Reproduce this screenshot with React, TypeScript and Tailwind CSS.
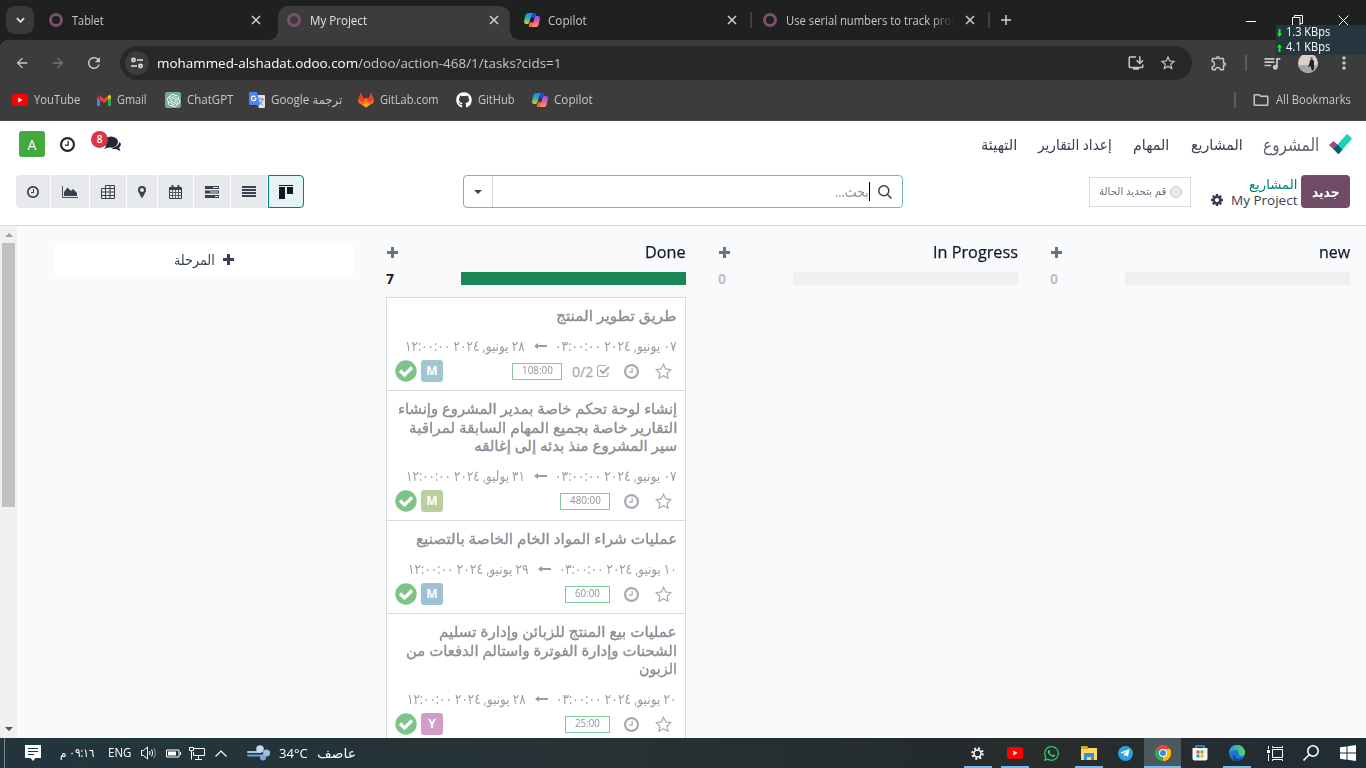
import { useLayoutEffect, useRef, useState } from "react";
import type { ReactNode } from "react";
import { MdArrowBack, MdArrowForward, MdRefresh, MdStarOutline, MdOutlineExtension, MdQueueMusic, MdMoreVert, MdOutlineFolder, MdInstallDesktop } from "react-icons/md";
import { FaGithub, FaWhatsapp, FaTelegramPlane } from "react-icons/fa";
import { SiOpenai } from "react-icons/si";

/* Text condensed or widened to an exact advance width. */
function Fit({ w, rtl, className = "", children }: { w: number; rtl?: boolean; className?: string; children: ReactNode }) {
  const ref = useRef<HTMLSpanElement>(null);
  const [scale, setScale] = useState(1);
  useLayoutEffect(() => {
    if (ref.current && ref.current.offsetWidth) setScale(w / ref.current.offsetWidth);
  }, [w]);
  return (
    <span className={`flex shrink-0 whitespace-nowrap ${rtl ? "justify-end" : "justify-start"} ${className}`} style={{ width: w }}>
      <span ref={ref} dir={rtl ? "rtl" : "ltr"} className={`inline-block shrink-0 ${rtl ? "origin-right" : "origin-left"}`} style={{ transform: `scaleX(${scale})` }}>
        {children}
      </span>
    </span>
  );
}

const Ring = () => <span className="size-[14px] shrink-0 rounded-full border-[3px] border-[#7b4f70]" />;

const X = ({ className = "" }: { className?: string }) => (
  <svg viewBox="0 0 10 10" className={`size-[10px] shrink-0 ${className}`} fill="none" stroke="currentColor" strokeWidth="1.5"><path d="M1 1l8 8M9 1L1 9" /></svg>
);

function Copilot() {
  return (
    <svg viewBox="0 0 16 16" className="size-4 shrink-0">
      <defs>
        <linearGradient id="cpa" x1="0" y1="0" x2="0" y2="1"><stop offset="0" stopColor="#1b8af5" /><stop offset=".5" stopColor="#27b3b0" /><stop offset=".8" stopColor="#a5c83c" /><stop offset="1" stopColor="#f3c01d" /></linearGradient>
        <linearGradient id="cpb" x1="0" y1="0" x2="0" y2="1"><stop offset="0" stopColor="#9b4fe8" /><stop offset=".5" stopColor="#e45ca8" /><stop offset="1" stopColor="#fb9a58" /></linearGradient>
      </defs>
      <path d="M5 15h5.200c1.400 0 2-.9 2.400-2.200l.5-2.600H6.500L5 12z" fill="#f6663f" />
      <path d="M5 1h5.200c1.300 0 1.900.9 2.200 2.200l.6 2.400H7.500L6 3z" fill="#1c50d0" />
      <path d="M4.800 1H9.500C8.200 1 7.700 2 7.300 3.300L5.600 9.600C5.200 11 4.600 12 3.300 12H2.200C.4 12-.2 10.700.1 9l1.200-5.400C1.700 1.800 3 1 4.800 1z" fill="url(#cpa)" />
      <path d="M11.200 15H6.500c1.300 0 1.800-1 2.200-2.300l1.700-6.300C10.800 5 11.400 4 12.700 4h1.100c1.800 0 2.400 1.300 2.100 3l-1.200 5.400c-.4 1.800-1.700 2.600-3.500 2.600z" fill="url(#cpb)" />
    </svg>
  );
}

const YouTube = () => (
  <svg viewBox="0 0 16 12" className="h-3 w-4 shrink-0"><rect width="16" height="12" rx="3" fill="#f00" /><path d="M6.300 3.500v5L10.600 6z" fill="#fff" /></svg>
);

const Gmail = () => (
  <svg viewBox="0 0 14 11" className="h-[11px] w-[14px] shrink-0">
    <path d="M0 2v8.200c0 .5.300.800.800.800H3V4z" fill="#4285f4" />
    <path d="M14 2v8.200c0 .5-.300.800-.800.800H11V4z" fill="#34a853" />
    <path d="M11 1v4l3-2.200V1.500C14 .2 12.500-.4 11.500.4z" fill="#fbbc04" />
    <path d="M3 1v4L0 2.800V1.500C0 .2 1.500-.4 2.500.4z" fill="#c5221f" />
    <path d="M3 .8V5l4 3 4-3V.8L7 3.800z" fill="#ea4335" />
  </svg>
);

const ChatGpt = () => (
  <span className="flex size-4 shrink-0 items-center justify-center rounded-[2px] bg-[#74aa9c]"><SiOpenai className="size-[13px] text-white" /></span>
);

const Translate = () => (
  <svg viewBox="0 0 16 16" className="size-4 shrink-0">
    <path d="M7 3h8.200c.4 0 .8.300.8.800V15c0 .5-.400.900-.900.900H9.500z" fill="#dfe1e4" />
    <path d="M8 7h7M11.400 5.800V7M9.500 8.200c.8 1.800 2.300 3.400 4.300 4.600M13.800 7.200c-.6 2.400-2 4.200-4.200 5.400" stroke="#6d7c8c" strokeWidth=".9" fill="none" />
    <path d="M.8 0H8l3 13H.9c-.500 0-.9-.400-.9-.9V.8C0 .3.300 0 .8 0z" fill="#4a86f0" />
    <path d="M9.700 13H6.800l2.700 3z" fill="#2457c5" />
    <path d="M6.500 5A2.300 2.300 0 1 0 7 6.700H4.800" stroke="#fff" strokeWidth="1.100" fill="none" />
  </svg>
);

const GitLab = () => (
  <svg viewBox="0 0 16 16" className="size-4 shrink-0">
    <path d="M2.800.8L.3 7.400c-.500 1.500 0 3 1.200 4L8 15.600l6.500-4.200c1.200-1 1.700-2.500 1.200-4L13.200.800 10.800 6H5.200z" fill="#fc6d26" />
    <path d="M2.800.8L.3 7.400 4.700 10.500 8 6H5.200zM13.200.8l2.500 6.600-4.400 3.100L8 6h2.800z" fill="#e24329" />
    <path d="M4.700 12.800L8 10.300l3.300 2.500L8 15.500z" fill="#fca326" />
  </svg>
);

type TabProps = { icon: ReactNode; label: string; w: number; active?: boolean; fade?: boolean; cop?: boolean };
function Tab({ icon, label, w, active, fade, cop }: TabProps) {
  return (
    <div className={`relative flex h-[34px] w-[238px] shrink-0 items-center pb-1.5 ${cop ? "pl-2" : "pl-[9px]"}`}>
      {active && (
        <span className="absolute inset-y-0 left-0 w-[232px] rounded-t-[10px] bg-[#3c3c3c]">
          <span className="absolute bottom-0 -left-[10px] size-[10px] bg-[radial-gradient(circle_at_0_0,transparent_10px,#3c3c3c_10px)]" />
          <span className="absolute -right-[10px] bottom-0 size-[10px] bg-[radial-gradient(circle_at_100%_0,transparent_10px,#3c3c3c_10px)]" />
        </span>
      )}
      <span className={`relative flex w-full items-center ${cop ? "gap-2" : "gap-[9px]"}`}>
        {icon}
        <span className={`w-[168px] pt-px ${fade ? "overflow-hidden [mask-image:linear-gradient(to_right,#000_145px,transparent_168px)]" : ""}`}>
          <Fit w={w} className={active ? "text-[12px] text-[#e3e3e3]" : "text-[12px] text-[#c7c7c7]"}>{label}</Fit>
        </span>
        <X className={cop ? "ml-[3px] text-[#d0d0d0]" : "ml-[2px] text-[#d0d0d0]"} />
      </span>
    </div>
  );
}

const bookmarks: { icon: ReactNode; label: string; w: number; gap: string }[] = [
  { icon: <YouTube />, label: "YouTube", w: 46, gap: "" },
  { icon: <Gmail />, label: "Gmail", w: 30, gap: "ml-[17px]" },
  { icon: <ChatGpt />, label: "ChatGPT", w: 46, gap: "ml-[18px]" },
  { icon: <Translate />, label: "Google ترجمة", w: 71, gap: "ml-4" },
  { icon: <GitLab />, label: "GitLab.com", w: 59, gap: "ml-4" },
  { icon: <FaGithub className="size-4 text-white" />, label: "GitHub", w: 37, gap: "ml-[17px]" },
  { icon: <Copilot />, label: "Copilot", w: 39, gap: "ml-[17px]" },
];

function Browser() {
  return (
    <header className="relative h-[121px] shrink-0 border-b border-[#4a4a4a] bg-[#3c3c3c] text-[12px] text-[#c7c7c7]">
      <div className="flex h-10 items-start bg-[#1f2120] pt-1.5">
        <span className="ml-1.5 mr-1.5 flex size-7 items-center justify-center rounded-[9px] bg-[#3a3a3a]">
          <svg viewBox="0 0 10 6" className="h-1.5 w-[9px]" fill="none" stroke="#e3e3e3" strokeWidth="2"><path d="M1 1l4 4 4-4" /></svg>
        </span>
        <Tab icon={<Ring />} label="Tablet" w={32} />
        <Tab icon={<Ring />} label="My Project" w={57} active />
        <Tab icon={<Copilot />} label="Copilot" w={39} cop />
        <div className="relative flex">
          <span className="absolute top-[6px] -left-[4px] h-4 w-[2px] bg-[#3f4140]" />
          <Tab icon={<Ring />} label="Use serial numbers to track produ" w={179} fade />
          <span className="absolute top-[6px] right-[2px] h-4 w-[2px] bg-[#3f4140]" />
        </div>
        <svg viewBox="0 0 10 10" className="mt-[9px] ml-[9px] size-[10px]" stroke="#d0d0d0" strokeWidth="1.500"><path d="M5 0v10M0 5h10" /></svg>
        <div className="mt-[9px] mr-[17px] ml-auto flex items-center text-white">
          <svg viewBox="0 0 10 10" className="mr-9 size-[10px]" stroke="#fff"><path d="M0 5.500h10" /></svg>
          <svg viewBox="0 0 11 11" className="mr-[35px] size-[11px]" stroke="#fff" fill="none"><path d="M.5 2.500h7.500v8H.5zM2.500 2.500v-2h8v8H8" /></svg>
          <svg viewBox="0 0 11 11" className="size-[11px]" stroke="#fff"><path d="M.5.5l10 10M10.500.5l-10 10" /></svg>
        </div>
      </div>
      <span className="absolute top-10 left-0 size-2 bg-[radial-gradient(circle_at_100%_100%,transparent_8px,#1f2120_8px)]" />
      <div className="flex h-[46px] items-center">
        <MdArrowBack className="ml-[14px] size-4" />
        <MdArrowForward className="ml-5 size-4 text-[#757575]" />
        <MdRefresh className="ml-[19px] size-[18px]" />
        <div className="ml-[17px] flex h-[34px] w-[1072px] items-center rounded-full bg-[#282828] pl-[5px] text-[13.500px]">
          <span className="flex size-6 items-center justify-center rounded-full bg-[#3c3c3c]">
            <svg viewBox="0 0 12 12" className="size-3" fill="none" stroke="#e3e3e3" strokeWidth="1.600"><circle cx="2.500" cy="3" r="1.600" /><path d="M6 3h6M0 9h6" /><circle cx="9.500" cy="9" r="1.600" /></svg>
          </span>
          <Fit w={404} className="ml-2"><span className="text-white">mohammed-alshadat.odoo.com</span>/odoo/action-468/1/tasks?cids=1</Fit>
          <MdInstallDesktop className="mr-[14px] ml-auto size-[18px]" />
          <MdStarOutline className="mr-[15px] size-[18px]" />
        </div>
        <MdOutlineExtension className="ml-[18px] size-[18px]" />
        <span className="ml-[17px] h-4 w-[2px] bg-[#5b5b5b]" />
        <MdQueueMusic className="ml-[15px] size-5" />
        <span className="ml-4 size-5 overflow-hidden rounded-full">
          <svg viewBox="0 0 20 20"><rect width="20" height="20" fill="#e0cfc6" /><path d="M0 12h20v8H0z" fill="#a6a7aa" /><path d="M12 7l2-1 2 2v8l-2 2-1.500-5-2.500 1 1.500-4z" fill="#20242a" /><circle cx="13.500" cy="5" r="1.300" fill="#9a6f62" /></svg>
        </span>
        <MdMoreVert className="ml-[16px] size-5" />
      </div>
      <div className="flex h-7 items-center pl-3">
        {bookmarks.map((b) => (
          <span key={b.label} className={`flex items-center gap-1.5 ${b.gap}`}>{b.icon}<Fit w={b.w}>{b.label}</Fit></span>
        ))}
        <span className="mr-4 ml-auto h-4 w-[2px] bg-[#5b5b5b]" />
        <MdOutlineFolder className="size-[18px]" />
        <Fit w={75} className="mr-[15px] ml-[6px]">All Bookmarks</Fit>
      </div>
      <div className="absolute top-[25px] right-0 flex h-[30px] w-[90px] flex-col bg-[#26363f] pl-px text-[12px] leading-[15px] text-white">
        {["1.3 KBps", "4.1 KBps"].map((t, i) => (
          <span key={t} className="flex h-[15px] items-center gap-1">
            <svg viewBox="0 0 5 8" className={`h-2 w-[5px] ${i ? "rotate-180" : ""}`} fill="#0f0"><path d="M1.500 0h2v4.500H5L2.500 8 0 4.500h1.500z" /></svg>
            <Fit w={44} className="pb-[2px] leading-[13px]">{t}</Fit>
          </span>
        ))}
      </div>
    </header>
  );
}

const Clock = ({ className = "" }: { className?: string }) => (
  <svg viewBox="0 128 1536 1536" className={`shrink-0 ${className}`} fill="currentColor">
    <path d="M896 544v448q0 14-9 23t-23 9h-320q-14 0-23-9t-9-23v-64q0-14 9-23t23-9h224v-352q0-14 9-23t23-9h64q14 0 23 9t9 23zm416 352q0-148-73-273t-198-198-273-73-273 73-198 198-73 273 73 273 198 198 273 73 273-73 198-198 73-273zm224 0q0 209-103 385.500t-279.500 279.500-385.500 103-385.500-103-279.500-279.500-103-385.500 103-385.500 279.500-279.500 385.500-103 385.500 103 279.500 279.500 103 385.500z" />
  </svg>
);

const Plus = ({ className = "" }: { className?: string }) => (
  <svg viewBox="0 0 11 11" className={`size-[11px] shrink-0 ${className}`} fill="currentColor"><path d="M4 0h3v4h4v3H7v4H4V7H0V4h4z" /></svg>
);

const Cog = ({ className = "" }: { className?: string }) => (
  <svg viewBox="128 128 1536 1536" className={`shrink-0 ${className}`} fill="currentColor">
    <path d="M1152 896q0-106-75-181t-181-75-181 75-75 181 75 181 181 75 181-75 75-181zm512-109v222q0 12-8 23t-20 13l-185 28q-19 54-39 91 35 50 107 138 10 12 10 25t-9 23q-27 37-99 108t-94 71q-12 0-26-9l-138-108q-44 23-91 38-16 136-29 186-7 28-36 28h-222q-14 0-24.500-8.500t-11.500-21.500l-28-184q-49-16-90-37l-141 107q-10 9-25 9-14 0-25-11-126-114-165-168-7-10-7-23 0-12 8-23 15-21 51-66.500t54-70.500q-27-50-41-99l-183-27q-13-2-21-12.500t-8-23.500v-222q0-12 8-23t19-13l186-28q14-46 39-92-40-57-107-138-10-12-10-24 0-10 9-23 26-36 98.500-107.500t94.500-71.500q13 0 26 10l138 107q44-23 91-38 16-136 29-186 7-28 36-28h222q14 0 24.500 8.500t11.500 21.500l28 184q49 16 90 37l142-107q9-9 24-9 13 0 25 10 129 119 165 170 7 8 7 22 0 12-8 23-15 21-51 66.500t-54 70.500q26 50 41 98l183 28q13 2 21 12.500t8 23.500z" />
  </svg>
);

const views: { w: string; icon: ReactNode }[] = [
  { w: "w-[34px] rounded-l-[4px]", icon: <Clock className="size-3" /> },
  { w: "w-[38px]", icon: <svg viewBox="0 0 16 12" className="h-3 w-4"><path d="M.5 0v11.500H16" fill="none" stroke="#6b3a6f" /><path d="M2 10V6l3.500-4.500L9 5l2-2 4 4v3z" fill="currentColor" /></svg> },
  { w: "w-9", icon: <svg viewBox="0 0 14 14" className="size-[14px]" fill="none" stroke="currentColor"><path d="M4.500 3.500v-3h9v13H.5v-10h13M.5 7h13M.5 10.500h13M4.500 3.500v10M9 .5v13" /></svg> },
  { w: "w-[30px]", icon: <svg viewBox="0 0 8 12" className="h-3 w-2" fill="currentColor"><path fillRule="evenodd" d="M4 0a4 4 0 0 1 4 4c0 1.500-.600 2.200-1 3L4.700 11.600c-.3.500-1.100.5-1.400 0L1 7C.6 6.200 0 5.500 0 4a4 4 0 0 1 4-4zm0 2a2 2 0 1 0 0 4 2 2 0 0 0 0-4z" /></svg> },
  { w: "w-[35px]", icon: <svg viewBox="0 0 13 14" className="h-[14px] w-[13px]" fill="none" stroke="currentColor"><path d="M.5 2.500h12v11H.5z" /><path d="M.5 4h12" strokeWidth="2" /><path d="M3.500 0v4M9.500 0v4" strokeWidth="2" /><path strokeWidth=".8" d="M.5 7.500h12M.5 10.500h12M3.500 5v8M6.500 5v8M9.500 5v8" /></svg> },
  { w: "w-9", icon: <svg viewBox="0 0 14 12" className="h-3 w-[14px]" fill="currentColor"><path fillRule="evenodd" d="M0 0h14v3H0zM8 1v1h5V1zM0 4.500h14v3H0zM5 5.500v1h8v-1zM0 9h14v3H0zM10 10v1h3v-1z" /></svg> },
  { w: "w-9", icon: <svg viewBox="0 0 14 11" className="h-[11px] w-[14px]" fill="currentColor"><path d="M0 0h14v2H0zM0 3h14v2H0zM0 6h14v2H0zM0 9h14v2H0z" /></svg> },
];

function OdooHeader() {
  return (
    <div className="h-[105px] shrink-0 border-b border-[#d8dadd] bg-white text-[#374151]">
      <div className="flex h-[46px] items-center">
        <span className="ml-[19px] flex size-[26px] items-center justify-center rounded-[3px] bg-[#44a83c] text-[14px] text-white">A</span>
        <Clock className="ml-[15px] size-[15px] text-[#1f2937]" />
        <span className="relative ml-[28px] h-4 w-[18px] text-[#1f2937]">
          <svg viewBox="0 0 18 16" className="h-4 w-[18px]" fill="currentColor"><ellipse cx="8" cy="6" rx="7" ry="5.500" /><path d="M4 9L1 13l6-2zM16.500 5.500c2 2.200 1.700 4.600-.4 6l1.400 3.500-4.500-2c-2 .3-4-.2-5.200-1.200C12 12 16 9.500 16.500 5.500z" /></svg>
          <span className="absolute -top-[5px] -left-[12px] flex size-[17px] items-center justify-center rounded-full bg-[#dc3545] text-[10px] font-semibold text-white">8</span>
        </span>
        <div className="ml-auto flex items-center text-[15px]">
          <Fit w={36} rtl>التهيئة</Fit>
          <Fit w={74} rtl className="ml-[21px]">إعداد التقارير</Fit>
          <Fit w={36} rtl className="ml-[21px]">المهام</Fit>
          <Fit w={52} rtl className="ml-[22px]">المشاريع</Fit>
          <Fit w={56} rtl className="ml-5 text-[18px] text-[#5f636f]">المشروع</Fit>
        </div>
        <svg viewBox="0 0 23 21" className="mr-[14px] ml-[10px] h-[21px] w-[23px]">
          <path d="M0 11l4.500-4 5 4.500L5 16z" fill="#985184" /><path d="M17.500.5c.5-.5 1-.5 1.500 0L22.500 4c.5.500.5 1 0 1.500L13 16 8 11z" fill="#1ad3bb" /><path d="M8.500 10.500l5 5-3 3.800c-.7.800-1.500.8-2.300 0L4.500 15z" fill="#005e7a" />
        </svg>
      </div>
      <div className="flex h-[49px] items-center">
        <div className="ml-4 flex h-[33px] gap-px">
          {views.map((v, i) => <span key={i} className={`flex items-center justify-center bg-[#e7e9ed] ${v.w}`}>{v.icon}</span>)}
          <span className="flex w-9 items-center justify-center rounded-r-[4px] border border-[#017e84] bg-[#e6f2f3] text-[#111827]">
            <svg viewBox="0 0 14 14" className="size-[14px]" fill="currentColor"><path d="M0 0h14v1H0zM0 2h6v12H0zM8 2h6v7H8z" /></svg>
          </span>
        </div>
        <div className="ml-[159px] flex h-[33px] w-[440px] items-center rounded-[4px] border border-[#71b9b9]">
          <span className="flex h-full w-[29px] items-center justify-center border-r border-[#d8dadd]"><span className="border-x-[4px] border-t-[4px] border-x-transparent border-t-[#374151]" /></span>
          <Fit w={34} rtl className="ml-auto text-[14px] text-[#8b909a]">بحث...</Fit>
          <span className="h-[19px] w-px bg-black" />
          <svg viewBox="0 0 14 14" className="mr-[10px] ml-2 size-[14px]" fill="none" stroke="currentColor" strokeWidth="1.500"><circle cx="5.800" cy="5.800" r="5" /><path d="M9.500 9.500l4 4" /></svg>
        </div>
        <div className="ml-[186px] flex h-[30px] w-[102px] items-center justify-end border border-[#d8dadd] pr-2">
          <Fit w={68} rtl className="text-[11px] text-[#6b7280]">قم بتحديد الحالة</Fit>
          <span className="ml-1 size-3 rounded-full border border-[#c4c6ca] bg-[#e7e9ed]" />
        </div>
        <div className="ml-5 flex w-[86px] flex-col items-end text-[14px] leading-4">
          <Fit w={48} rtl className="text-[13px] text-[#017e84]">المشاريع</Fit>
          <span className="flex items-center"><Cog className="mr-2 size-3" /><Fit w={66} className="text-[13.500px]">My Project</Fit></span>
        </div>
        <span className="ml-1 flex h-[33px] w-[49px] items-center justify-center rounded-[4px] bg-[#714b67] text-[14px] font-bold text-white"><Fit w={28} rtl>جديد</Fit></span>
      </div>
    </div>
  );
}

type Card = { lines: [string, number][]; from: string; to: string; fw: number; tw: number; hours: string; hb: string; hw: number; who: string; color: string; h: string; sub?: boolean };
const cards: Card[] = [
  { lines: [["طريق تطوير المنتج", 121]], from: "٠٧ يونيو, ٢٠٢٤ ٠٣:٠٠:٠٠", to: "٢٨ يونيو, ٢٠٢٤ ١٢:٠٠:٠٠", fw: 122, tw: 120, hours: "108:00", hb: "w-[50px] mr-[10px]", hw: 31, who: "M", color: "bg-[#a0c7d1]", h: "h-[93px]", sub: true },
  { lines: [["إنشاء لوحة تحكم خاصة بمدير المشروع وإنشاء", 279], ["التقارير خاصة بجميع المهام السابقة لمراقبة", 268], ["سير المشروع منذ بدئه إلى إغالقه", 203]], from: "٠٧ يونيو, ٢٠٢٤ ٠٣:٠٠:٠٠", to: "٣١ يوليو, ٢٠٢٤ ١٢:٠٠:٠٠", fw: 122, tw: 119, hours: "480:00", hb: "w-[50px] mr-[14px]", hw: 31, who: "M", color: "bg-[#b9d09c]", h: "h-[130px]" },
  { lines: [["عمليات شراء المواد الخام الخاصة بالتصنيع", 261]], from: "١٠ يونيو, ٢٠٢٤ ٠٣:٠٠:٠٠", to: "٢٩ يونيو, ٢٠٢٤ ١٢:٠٠:٠٠", fw: 118, tw: 121, hours: "60:00", hb: "w-[45px] mr-[14px]", hw: 25, who: "M", color: "bg-[#9fc1d6]", h: "h-[93px]" },
  { lines: [["عمليات بيع المنتج للزبائن وإدارة تسليم", 238], ["الشحنات وإدارة الفوترة واستالم الدفعات من", 271], ["الزبون", 38]], from: "٢٠ يونيو, ٢٠٢٤ ٠٣:٠٠:٠٠", to: "٢٨ يونيو, ٢٠٢٤ ١٢:٠٠:٠٠", fw: 121, tw: 119, hours: "25:00", hb: "w-[45px] mr-[14px]", hw: 25, who: "Y", color: "bg-[#d09dc6]", h: "h-[130px]" },
];

function TaskCard({ c }: { c: Card }) {
  return (
    <div className={`flex shrink-0 flex-col items-end border-b border-[#d8dadd] bg-white pt-2 pr-2 pl-2 ${c.h}`}>
      <div className="flex flex-col items-end text-[15px] leading-[18.500px] text-[#8b8d96] [-webkit-text-stroke:0.35px_#8b8d96]">
        {c.lines.map(([t, w]) => <Fit key={t} w={w} rtl>{t}</Fit>)}
      </div>
      <div className="mt-[11px] flex h-5 items-center text-[14px] leading-5 text-[#9a9da5]">
        <Fit w={c.tw} rtl>{c.to}</Fit>
        <svg viewBox="0 0 13 6" className="mr-2 ml-[9px] h-1.5 w-[13px]" fill="currentColor"><path d="M0 3l4-3v2h9v2H4v2z" /></svg>
        <Fit w={c.fw} rtl>{c.from}</Fit>
      </div>
      <div className="mt-[4px] flex h-[23px] w-full items-center text-[#a9abb2]">
        <svg viewBox="0 0 22 22" className="size-[22px]"><circle cx="11" cy="11" r="10.700" fill="#7ec48a" /><path d="M5 10.500l4.500 4.500L17 7.500" stroke="#fff" strokeWidth="3.200" fill="none" /></svg>
        <span className={`ml-[4px] flex size-[22px] items-center justify-center rounded-[3px] text-[12px] font-bold text-white ${c.color}`}>{c.who}</span>
        <span className={`ml-auto flex h-[17px] items-center justify-center border border-[#83cb98] text-[10.500px] text-[#8f929a] ${c.hb}`}><Fit w={c.hw}>{c.hours}</Fit></span>
        {c.sub && (
          <span className="mr-[14px] flex items-center text-[14px]">
            <Fit w={21} className="font-medium [-webkit-text-stroke:0.3px_#a9abb2]">0/2</Fit>
            <svg viewBox="0 0 13 12" className="ml-1 h-3 w-[13px]" fill="none" stroke="currentColor"><path d="M11 7v2.500a2 2 0 0 1-2 2H2.500a2 2 0 0 1-2-2v-7a2 2 0 0 1 2-2H9" strokeWidth="1.100" /><path d="M3 5l3 3 6-6" strokeWidth="2" /></svg>
          </span>
        )}
        <Clock className="size-[15px]" />
        <svg viewBox="0 0 17 16" className="mr-[5px] ml-[16px] h-4 w-[17px]" fill="none" stroke="currentColor" strokeWidth="1.200"><path d="M8.500 1.200l2.200 4.700 5.100.7-3.700 3.600.9 5.100-4.500-2.500L4 15.300l.9-5.100L1.200 6.600l5.100-.7z" /></svg>
      </div>
    </div>
  );
}

function Column({ title, w, count, children }: { title: string; w: number; count: number; children?: ReactNode }) {
  return (
    <section className="flex w-[300px] shrink-0 flex-col pt-[14px]">
      <div className="flex h-6 items-center justify-between text-[17px] text-[#111827]"><Plus className="ml-[1px] text-[#6b7280]" /><Fit w={w} className="[-webkit-text-stroke:0.25px_#111827]">{title}</Fit></div>
      <div className="mt-2 mb-[12px] flex h-[13px] items-center justify-between">
        <span className={`text-[14px] font-bold ${count ? "text-[#111827]" : "text-[#bfc1c5]"}`}>{count}</span>
        <span className={`h-[13px] w-[225px] ${count ? "bg-[#1a8754]" : "bg-[#eff0f2]"}`} />
      </div>
      {children}
    </section>
  );
}

function Board() {
  return (
    <main className="flex min-h-0 flex-1 overflow-hidden bg-[#f9fafc]">
      <div className="flex w-[17px] shrink-0 flex-col items-center justify-between bg-[#f0f0f0] pt-[7px] pb-[7px]">
        <span className="flex flex-col items-center gap-[6px]">
          <span className="border-x-[4px] border-b-[4px] border-x-transparent border-b-[#a0a0a0]" />
          <span className="h-[264px] w-[13px] bg-[#c1c1c1]" />
        </span>
        <span className="border-x-[4px] border-t-[4px] border-x-transparent border-t-[#505050]" />
      </div>
      <div className="ml-[37px] flex gap-8">
        <div className="mt-[17px] flex h-[33px] w-[300px] shrink-0 items-center justify-center rounded-[4px] bg-white text-[14px] text-[#374151]">
          <Fit w={41} rtl>المرحلة</Fit><Plus className="ml-2" />
        </div>
        <Column title="Done" w={41} count={7}>
          <div className="flex flex-col border-x border-t border-[#d8dadd]">{cards.map((c) => <TaskCard key={c.hours} c={c} />)}</div>
        </Column>
        <Column title="In Progress" w={85} count={0} />
        <Column title="new" w={31} count={0} />
      </div>
    </main>
  );
}

const apps: { icon: ReactNode; open?: boolean; active?: boolean }[] = [
  { open: true, icon: <svg viewBox="0 0 14 14" className="size-[13px]" fill="none" stroke="#fff"><circle cx="7" cy="7" r="3.800" strokeWidth="1.600" /><circle cx="7" cy="7" r="5.600" strokeWidth="2.200" strokeDasharray="2.200 2.198" /></svg> },
  { open: true, icon: <YouTube /> },
  { icon: <FaWhatsapp className="size-[17px] text-[#25d366]" /> },
  { open: true, icon: <svg viewBox="0 0 16 14" className="h-[14px] w-4"><path d="M0 0h6l1.500 2H16v12H0z" fill="#e5a50f" /><path d="M0 3h7l1-1h8v12H0z" fill="#ffd766" /><path d="M3 14V7h10v7h-3v-3H6v3z" fill="#3b8ede" /></svg> },
  { icon: <span className="flex size-[15px] items-center justify-center rounded-full bg-[#2ba0da]"><FaTelegramPlane className="mr-px size-[10px] text-white" /></span> },
  { open: true, active: true, icon: <svg viewBox="0 0 16 16" className="size-4"><path d="M8 8L1.070 4A8 8 0 0 1 14.930 4z" fill="#ea4335" /><path d="M8 8l6.930-4A8 8 0 0 1 8 16z" fill="#fbbc04" /><path d="M8 8v8A8 8 0 0 1 1.070 4z" fill="#34a853" /><path d="M8 4h6.930A8 8 0 0 1 8 16l3.500-6z" fill="#fbbc04" /><circle cx="8" cy="8" r="4" fill="#fff" /><circle cx="8" cy="8" r="3" fill="#4285f4" /></svg> },
  { icon: <svg viewBox="0 0 16 16" className="size-4"><path d="M4 3V1h8v2" stroke="#2aa5e5" fill="none" strokeWidth="1.500" /><path d="M.5 3h15v10.500c0 1-.800 2-2 2h-11c-1.200 0-2-1-2-2z" fill="#f4f4f4" /><path d="M4.500 5.500h3v3h-3z" fill="#e8502d" /><path d="M8.500 5.500h3v3h-3z" fill="#7db72f" /><path d="M4.500 9.500h3v3h-3z" fill="#1d9fe0" /><path d="M8.500 9.500h3v3h-3z" fill="#f8b81a" /></svg> },
  { open: true, icon: <svg viewBox="0 0 16 16" className="size-4"><defs><linearGradient id="edg"><stop offset="0" stopColor="#1c9ae8" /><stop offset="1" stopColor="#5fd75c" /></linearGradient></defs><circle cx="8" cy="8" r="8" fill="#1b78d0" /><path d="M0 8a8 8 0 0 1 16-.5c0 2.200-1.600 3.500-3.800 3.500-1.600 0-2.800-.700-2.400-1.500C10.500 7 8.500 4.800 6 5 3 5.200.5 7 0 8z" fill="url(#edg)" /><path d="M5.500 9.500c-.3 3 2.500 5 5.500 4.300 1.500-.3 2.800-.9 3.700-1.800-1.500 3-5 4.500-8 3.800C3.500 15 3 11 5.500 9.500z" fill="#0d4a90" /></svg> },
  { icon: <svg viewBox="0 0 17 15" className="ml-1 h-[15px] w-[17px]" fill="none" stroke="#fff"><path d="M5.500 3.500h10v8h-10zM5.500 0v1.500h10V0M5.500 15v-1.500h10V15M1.500 0v3M1.500 8v7" /><path d="M0 4h3v3H0z" fill="#fff" stroke="none" /></svg> },
  { icon: <svg viewBox="0 0 16 16" className="ml-px size-4" fill="none" stroke="#fff" strokeWidth="1.600"><circle cx="10" cy="6" r="5.200" /><path d="M6.200 9.800L.5 15.500" /></svg> },
  { icon: <svg viewBox="0 0 16 16" className="size-4" fill="#fff"><path d="M0 2.300L6.500 1.400v6.200H0zM7.500 1.200L16 0v7.600H7.500zM0 8.500h6.500v6.200L0 13.800zM7.500 8.500H16V16l-8.500-1.200z" /></svg> },
];

function Taskbar() {
  return (
    <footer className="flex h-[30px] shrink-0 items-center bg-[linear-gradient(90deg,#22353e,#273234_45%,#232b2e_68%,#292c2c_76%,#1f2d35)] text-[12px] text-white">
      <span className="ml-1 h-full w-px bg-[#7a858a]" />
      <svg viewBox="0 0 16 16" className="ml-5 size-4"><path d="M0 0h16v13h-5.500L8 16l-2.500-3H0z" fill="#fff" /><path d="M3 3.500h10M3 6.500h10M3 9.500h6" stroke="#22353e" /></svg>
      <Fit w={34} rtl className="ml-[19px]">٠٩:١٦ م</Fit>
      <Fit w={23} className="ml-[14px]">ENG</Fit>
      <svg viewBox="0 0 16 14" className="ml-[10px] h-[14px] w-4" fill="none" stroke="#fff"><path d="M.5 4.500h2L6.500 1v12l-4-3.500h-2zM8.500 5c.7 1.300.7 2.700 0 4M10.500 3.500c1.400 2.200 1.400 4.800 0 7" /><path d="M12.800 2c2 3 2 7 0 10" opacity=".5" /></svg>
      <svg viewBox="0 0 15 8" className="ml-[9px] h-[9px] w-[15px]" fill="none" stroke="#fff"><path d="M.5.500h12.500v7H.5zM14.500 2.500v3" /><path d="M2 2h8v4H2z" fill="#fff" stroke="none" /></svg>
      <svg viewBox="0 0 16 13" className="ml-2 h-[13px] w-4" fill="none" stroke="#fff"><path d="M5 1.500h10.500v7H4.500V5M.5.500h4v3h-4zM2.500 3.500v9M9.500 8.500v4M6 12.500h7" /></svg>
      <svg viewBox="0 0 12 7" className="ml-[10px] h-[7px] w-3" fill="none" stroke="#fff" strokeWidth="1.200"><path d="M.5 6.500L6 1l5.500 5.500" /></svg>
      <svg viewBox="0 0 23 16" className="ml-5 h-4 w-[23px]" fill="none" strokeLinecap="round"><path d="M1 7h12" stroke="#a9c6e6" strokeWidth="2" /><path d="M1 10.500h14" stroke="#6b9fd4" strokeWidth="2" /><circle cx="13" cy="4" r="3.800" fill="#c3daf2" /><circle cx="19.500" cy="8" r="3.500" fill="#a3bfdf" /><circle cx="16" cy="12.500" r="3" fill="#7fa9d8" /></svg>
      <Fit w={29} className="ml-[9px] text-[13.500px]">34°C</Fit>
      <Fit w={39} rtl className="ml-[9px] pt-[2px] text-[13px]">عاصف</Fit>
      <div className="ml-auto flex h-full">
        {apps.map((a, i) => (
          <span key={i} className={`relative flex w-[37px] items-center justify-center ${a.active ? "bg-[#4b585f]" : ""}`}>
            {a.icon}
            {a.open && <span className={`absolute bottom-0 h-[2px] bg-[#76b9ed] ${a.active ? "w-full" : "w-7"}`} />}
          </span>
        ))}
      </div>
    </footer>
  );
}

export default function App() {
  return (
    <div dir="ltr" className="flex h-[768px] w-[1366px] flex-col overflow-hidden bg-white font-['Open_Sans','Noto_Sans','DejaVu_Sans',sans-serif]">
      <Browser />
      <OdooHeader />
      <Board />
      <Taskbar />
    </div>
  );
}
